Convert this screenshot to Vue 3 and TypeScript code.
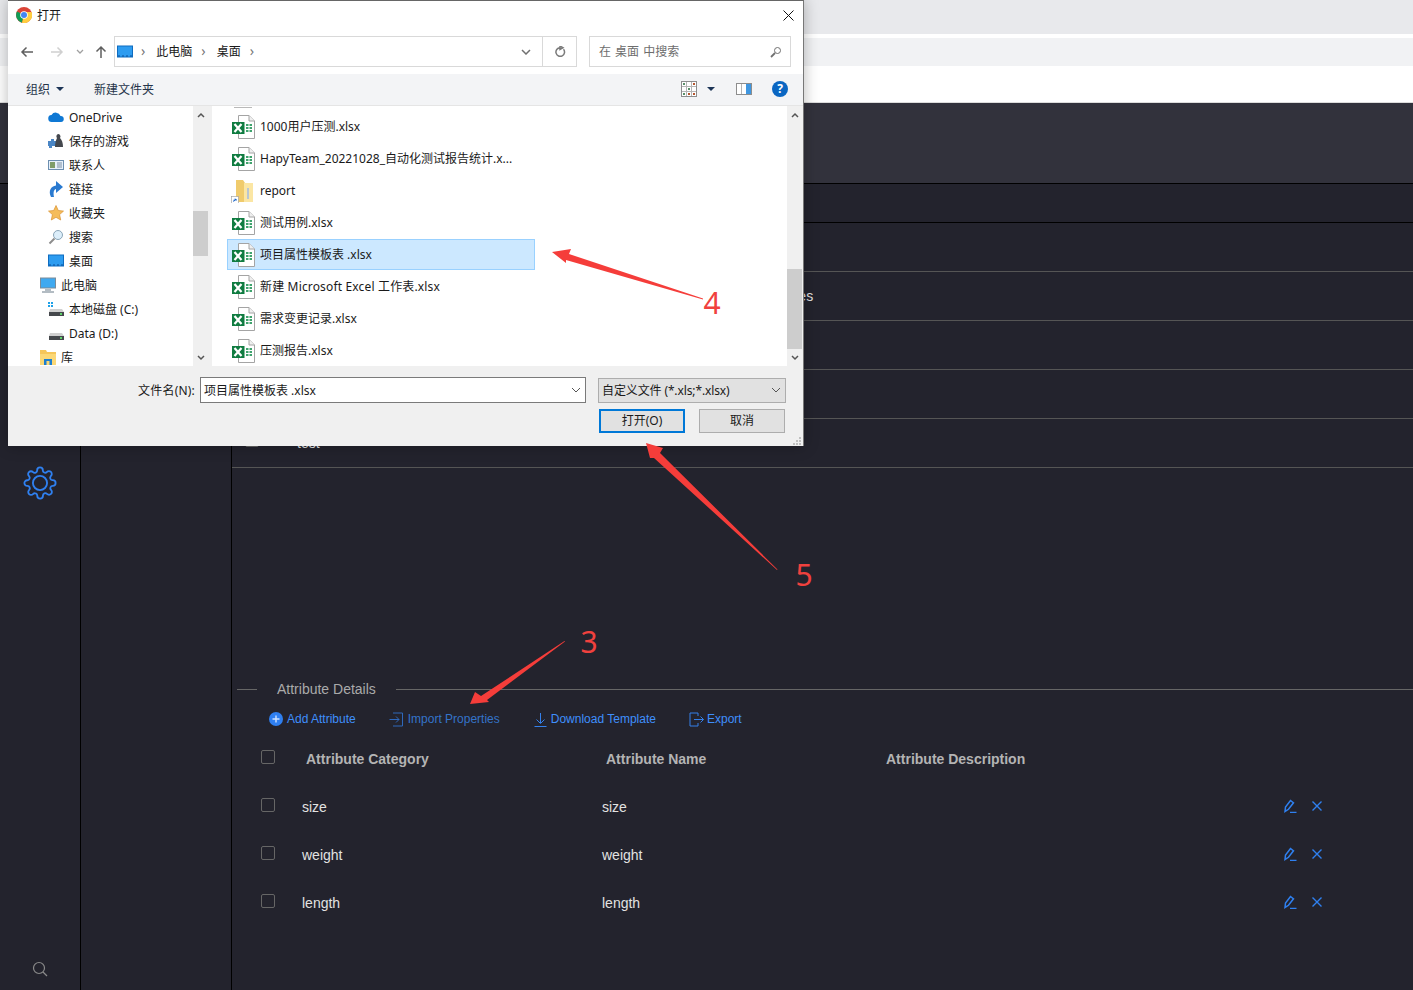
<template>
  <div class="page">
    <!-- browser chrome behind the dialog -->
    <div class="tabstrip"></div>
    <div class="urlbar"></div>
    <div class="bookmarks"></div>

    <header class="app-header"></header>

    <div class="app-body">
      <aside class="rail">
        <svg class="gear" viewBox="0 0 24 24">
          <circle cx="12" cy="12" r="5" />
          <path
            d="M19.4 15a1.65 1.65 0 0 0 .33 1.82l.06.06a2 2 0 0 1 0 2.83 2 2 0 0 1-2.83 0l-.06-.06a1.65 1.65 0 0 0-1.82-.33 1.65 1.65 0 0 0-1 1.51V21a2 2 0 0 1-2 2 2 2 0 0 1-2-2v-.09A1.65 1.65 0 0 0 9 19.4a1.65 1.65 0 0 0-1.82.33l-.06.06a2 2 0 0 1-2.83 0 2 2 0 0 1 0-2.83l.06-.06a1.65 1.65 0 0 0 .33-1.82 1.65 1.65 0 0 0-1.51-1H3a2 2 0 0 1-2-2 2 2 0 0 1 2-2h.09A1.65 1.65 0 0 0 4.6 9a1.65 1.65 0 0 0-.33-1.82l-.06-.06a2 2 0 0 1 0-2.83 2 2 0 0 1 2.83 0l.06.06a1.65 1.65 0 0 0 1.82.33H9a1.65 1.65 0 0 0 1-1.51V3a2 2 0 0 1 2-2 2 2 0 0 1 2 2v.09a1.65 1.65 0 0 0 1 1.51 1.65 1.65 0 0 0 1.82-.33l.06-.06a2 2 0 0 1 2.83 0 2 2 0 0 1 0 2.83l-.06.06a1.65 1.65 0 0 0-.33 1.82V9a1.65 1.65 0 0 0 1.51 1H21a2 2 0 0 1 2 2 2 2 0 0 1-2 2h-.09a1.65 1.65 0 0 0-1.51 1z"
          />
        </svg>
        <svg class="rail-search" viewBox="0 0 16 16">
          <circle cx="7" cy="7" r="5.5" />
          <path d="M11 11l4 4" />
        </svg>
      </aside>
      <nav class="subnav"></nav>

      <main class="content">
        <div class="tabbar"></div>
        <div v-for="(row, i) in topRows" :key="i" class="top-row">
          <span v-if="row.check" class="check check-top"></span>
          <span class="top-name">{{ row.name }}</span>
          <span class="top-desc">{{ row.desc }}</span>
        </div>

        <div class="divider">
          <span class="divider-text">Attribute Details</span>
        </div>

        <div class="actions">
          <a class="action add">
            <svg class="action-icon" viewBox="0 0 14 14">
              <circle cx="7" cy="7" r="7" fill="#2f7ff0" />
              <path d="M7 3.5v7M3.5 7h7" stroke="#cfe2ff" stroke-width="1.4" />
            </svg>
            Add Attribute
          </a>
          <a class="action import">
            <svg class="action-icon wide" viewBox="0 0 15 15">
              <path d="M4 1h9.500v13H4M0.500 7.500H10M7 4.500l3 3-3 3" />
            </svg>
            Import Properties
          </a>
          <a class="action download">
            <svg class="action-icon wide" viewBox="0 0 13 15">
              <path d="M6.500 1v10M2.500 7.500l4 4 4-4M0.500 14.500h12" />
            </svg>
            Download Template
          </a>
          <a class="action export">
            <svg class="action-icon wide" viewBox="0 0 15 15">
              <path d="M9 4V1H1v13h8v-3M5 7.500h9.500M11.500 4.500l3 3-3 3" />
            </svg>
            Export
          </a>
        </div>

        <div class="grid-row grid-head">
          <span class="check"></span>
          <span>Attribute Category</span>
          <span>Attribute Name</span>
          <span>Attribute Description</span>
          <span></span>
        </div>
        <div v-for="attr in attributes" :key="attr" class="grid-row">
          <span class="check"></span>
          <span>{{ attr }}</span>
          <span>{{ attr }}</span>
          <span></span>
          <span class="row-tools">
            <svg class="tool pencil" viewBox="0 0 14 14">
              <path d="M2 12.500L2.500 8l5-6.500 3 2.300-5 6.500zM7 13.500h6.500" />
            </svg>
            <svg class="tool close" viewBox="0 0 12 12">
              <path d="M1.500 1.500l9 9M10.500 1.500l-9 9" />
            </svg>
          </span>
        </div>
      </main>
    </div>

    <!-- Windows open-file dialog -->
    <section class="dialog">
      <svg class="defs" width="0" height="0">
        <symbol id="xlsx" viewBox="0 0 24 24">
          <path d="M7.500.5h10.500l5.500 5.500v17.500h-16z" fill="#fff" stroke="#a4a4a4" />
          <path d="M18 .5v5.500h5.500" fill="#efefef" stroke="#a4a4a4" />
          <rect x="1" y="7" width="12.500" height="12" fill="#107c41" />
          <path d="M3.500 9l7 8M10.500 9l-7 8" stroke="#fff" stroke-width="2.200" />
          <path d="M15 9h2.500v2H15zM18.500 9H21v2h-2.500zM15 12h2.500v2H15zM18.500 12H21v2h-2.500zM15 15h2.500v2H15zM18.500 15H21v2h-2.500z" fill="#3fa36d" />
        </symbol>
        <symbol id="folder" viewBox="0 0 24 24">
          <path d="M5 1h7l2 3h8v19H5z" fill="#f0cb6c" />
          <path d="M13 4h9v19h-9z" fill="#fbe6a4" />
          <path d="M16 9h2v11h-2z" fill="#b9c6d2" />
          <rect x=".5" y="17.500" width="7" height="7" fill="#fff" stroke="#9a9a9a" stroke-width=".6" />
          <path d="M2 23l.8-2.500h1.400l-.8-1 2.200.5v2l-.8-.8z" fill="#1e66c8" />
        </symbol>
        <symbol id="onedrive" viewBox="0 0 16 16">
          <path d="M4 13a3.500 3.500 0 0 1-.5-7A5 5 0 0 1 12.500 7 3 3 0 0 1 13 13z" fill="#0f78d4" />
        </symbol>
        <symbol id="games" viewBox="0 0 16 16">
          <path d="M0 8h3V6h3v2h2v5H4v2H1v-2H0z" fill="#4a86c5" />
          <path d="M10 1a2.500 2.500 0 0 1 2 4c2 2 3 5 3 9H7c0-4 1-7 2-9a2.500 2.500 0 0 1 1-4z" fill="#44484e" />
        </symbol>
        <symbol id="contact" viewBox="0 0 16 16">
          <rect x=".5" y="3.500" width="15" height="9" fill="#e6f0fa" stroke="#6d8fb0" />
          <rect x="2" y="5" width="5" height="6" fill="#7f9d6a" />
          <path d="M9 6h5M9 8h5M9 10h5" stroke="#7d8fa3" />
        </symbol>
        <symbol id="link" viewBox="0 0 16 16">
          <path d="M3 16C0 10 3 5 8 4.500V0l7 6-7 6V8C6 8.500 5 11 6 16z" fill="#2a7ad0" />
        </symbol>
        <symbol id="star" viewBox="0 0 16 16">
          <path d="M8 .5l2.300 5 5.200.6-3.900 3.500 1.100 5.400L8 12.300 3.300 15l1.100-5.400L.5 6.100l5.200-.6z" fill="#f5bc5a" stroke="#d9902f" stroke-width=".7" />
        </symbol>
        <symbol id="search" viewBox="0 0 16 16">
          <circle cx="10" cy="6" r="4.500" fill="#dceefa" stroke="#8aa5b8" />
          <path d="M6.500 9.500L1.500 14.500" stroke="#8d8d8d" stroke-width="2" />
        </symbol>
        <symbol id="desktop" viewBox="0 0 16 16">
          <rect x=".5" y="2" width="15" height="11" fill="#2d9cf0" stroke="#0f6cc0" />
          <path d="M1 12h14" stroke="#0a4f9a" stroke-dasharray="2 2" />
        </symbol>
        <symbol id="pc" viewBox="0 0 16 16">
          <rect x=".5" y="1" width="15" height="10" fill="#3fa9f0" stroke="#7a8b99" />
          <path d="M5 13h6M2 15h12" stroke="#9aa6b0" stroke-width="1.400" />
        </symbol>
        <symbol id="diskc" viewBox="0 0 16 16">
          <path d="M0 1h2v2H0zM3 1h2v2H3zM0 4h2v2H0zM3 4h2v2H3z" fill="#1ea1e8" />
          <path d="M2 8h12l2 3v4H1v-4z" fill="#d0d0d0" />
          <rect x="1" y="11" width="15" height="4" fill="#45484c" />
          <rect x="12" y="12" width="2" height="2" fill="#5fd16a" />
        </symbol>
        <symbol id="diskd" viewBox="0 0 16 16">
          <path d="M2 8h12l2 3v4H1v-4z" fill="#d0d0d0" />
          <rect x="1" y="11" width="15" height="4" fill="#45484c" />
          <rect x="12" y="12" width="2" height="2" fill="#5fd16a" />
        </symbol>
        <symbol id="library" viewBox="0 0 16 16">
          <path d="M0 1h6l1 2h9v13H0z" fill="#f5c65a" />
          <path d="M0 5h16v11H0z" fill="#fbd877" />
          <path d="M4 10h8v6H4z" fill="#1d7fd0" />
          <path d="M6.500 12h3v4h-3z" fill="#fbd877" />
        </symbol>
      </svg>

      <div class="title-bar">
        <svg class="chrome" viewBox="0 0 16 16">
          <circle cx="8" cy="8" r="8" fill="#db4437" />
          <path d="M8 8L1 4.500A8 8 0 0 0 6 15.800z" fill="#0f9d58" />
          <path d="M8 8l-2 7.800A8 8 0 0 0 15.500 5H8z" fill="#ffcd40" />
          <circle cx="8" cy="8" r="3.800" fill="#fff" />
          <circle cx="8" cy="8" r="3" fill="#4285f4" />
        </svg>
        <span class="title">打开</span>
        <svg class="title-close" viewBox="0 0 11 11">
          <path d="M.5.5l10 10M10.500.5l-10 10" />
        </svg>
      </div>

      <div class="nav-row">
        <svg class="nav-btn" viewBox="0 0 14 14">
          <path d="M13 7H2M6.500 2.500L2 7l4.500 4.500" />
        </svg>
        <svg class="nav-btn off" viewBox="0 0 14 14">
          <path d="M1 7h11M7.500 2.500L12 7l-4.500 4.500" />
        </svg>
        <svg class="nav-drop" viewBox="0 0 8 6">
          <path d="M1 1l3 3 3-3" />
        </svg>
        <svg class="nav-btn up" viewBox="0 0 14 14">
          <path d="M7 13V2M2.500 6.500L7 2l4.500 4.500" />
        </svg>
        <div class="address">
          <svg class="crumb-icon"><use href="#desktop" /></svg>
          <span class="crumb-sep">›</span>
          <span class="crumb">此电脑</span>
          <span class="crumb-sep">›</span>
          <span class="crumb">桌面</span>
          <span class="crumb-sep">›</span>
          <svg class="addr-chevron" viewBox="0 0 10 6">
            <path d="M1 1l4 4 4-4" />
          </svg>
          <span class="addr-refresh">
            <svg viewBox="0 0 12 12">
              <path d="M9.500 3.200A4.300 4.300 0 1 1 6 1.700M6 0v3.500L9 1.700z" />
            </svg>
          </span>
        </div>
        <div class="searchbox">
          <span>在 桌面 中搜索</span>
          <svg viewBox="0 0 12 12">
            <circle cx="7.500" cy="4.500" r="3" />
            <path d="M5 7l-4 4" stroke-width="1.800" />
          </svg>
        </div>
      </div>

      <div class="toolbar">
        <span class="tool-text">组织</span>
        <i class="caret"></i>
        <span class="tool-text new-folder">新建文件夹</span>
        <svg class="views" viewBox="0 0 16 16">
          <rect x=".5" y=".5" width="15" height="15" fill="#fff" stroke="#8d8d8d" />
          <path d="M5.500 1v14M10.500 1v14M1 5.500h14M1 10.500h14" stroke="#b5b5b5" />
          <path d="M2 2h2v2H2zM7 7h2v2H7zM2 12h2v2H2z" fill="#5a8f6a" />
          <path d="M12 2h2v2h-2zM12 12h2v2h-2zM7 12h2v2H7z" fill="#b5562f" />
        </svg>
        <i class="caret views-caret"></i>
        <svg class="pane" viewBox="0 0 16 12">
          <rect x=".5" y=".5" width="15" height="11" fill="#fff" stroke="#8d8d8d" />
          <rect x="10" y="1" width="5" height="10" fill="#3f96e0" />
          <path d="M5.500 1v10" stroke="#b5b5b5" />
        </svg>
        <span class="help">?</span>
      </div>

      <div class="browser">
        <div class="tree">
          <div
            v-for="item in treeItems"
            :key="item.label"
            class="tree-item"
            :class="{ root: item.root }"
          >
            <svg class="tree-icon"><use :href="'#' + item.icon" /></svg>
            <span>{{ item.label }}</span>
          </div>
        </div>
        <div class="scrollbar">
          <svg class="sb-arrow" viewBox="0 0 8 6"><path d="M1 5l3-3 3 3" /></svg>
          <div class="thumb tree-thumb"></div>
          <svg class="sb-arrow bottom" viewBox="0 0 8 6"><path d="M1 1l3 3 3-3" /></svg>
        </div>
        <div class="pane-gap"></div>
        <div class="files">
          <div class="cut-row"></div>
          <div
            v-for="file in files"
            :key="file.name"
            class="file"
            :class="{ selected: file.selected, spaced: file.spaced }"
          >
            <svg class="file-icon"><use :href="'#' + file.icon" /></svg>
            <span>{{ file.name }}</span>
          </div>
        </div>
        <div class="scrollbar">
          <svg class="sb-arrow" viewBox="0 0 8 6"><path d="M1 5l3-3 3 3" /></svg>
          <div class="thumb file-thumb"></div>
          <svg class="sb-arrow bottom" viewBox="0 0 8 6"><path d="M1 1l3 3 3-3" /></svg>
        </div>
      </div>

      <div class="footer">
        <div class="footer-row">
          <label class="file-label">文件名(N):</label>
          <div class="file-input">
            <span>项目属性模板表 .xlsx</span>
            <svg viewBox="0 0 10 6"><path d="M1 1l4 4 4-4" /></svg>
          </div>
          <div class="file-filter">
            <span>自定义文件 (*.xls;*.xlsx)</span>
            <svg viewBox="0 0 10 6"><path d="M1 1l4 4 4-4" /></svg>
          </div>
        </div>
        <div class="footer-buttons">
          <button class="win-btn primary">打开(O)</button>
          <button class="win-btn">取消</button>
        </div>
        <svg class="grip" viewBox="0 0 10 10">
          <path d="M7 1h2v2H7zM4 4h2v2H4zM7 4h2v2H7zM1 7h2v2H1zM4 7h2v2H4zM7 7h2v2H7z" />
        </svg>
      </div>
    </section>

    <!-- red annotations drawn over the screenshot -->
    <svg class="marks" viewBox="0 0 1413 990">
      <polygon points="552,252 571,249 569,254 703,298.600 703,299.400 566,260 566,263" />
      <polygon points="646,443 663,448 660,453 777.500,569.500 777,570 654,458 650,458" />
      <polygon points="470,704 475,692 481,696 564.500,641 565,641.500 487,700 489,702" />
      <text x="712" y="314">4</text>
      <text x="804" y="586">5</text>
      <text x="589" y="653">3</text>
    </svg>
  </div>
</template>

<script setup lang="ts">
interface TreeItem {
  label: string
  icon: string
  root?: boolean
}

interface FileItem {
  name: string
  icon: string
  selected?: boolean
  spaced?: boolean
}

const treeItems: TreeItem[] = [
  { label: 'OneDrive', icon: 'onedrive' },
  { label: '保存的游戏', icon: 'games' },
  { label: '联系人', icon: 'contact' },
  { label: '链接', icon: 'link' },
  { label: '收藏夹', icon: 'star' },
  { label: '搜索', icon: 'search' },
  { label: '桌面', icon: 'desktop' },
  { label: '此电脑', icon: 'pc', root: true },
  { label: '本地磁盘 (C:)', icon: 'diskc' },
  { label: 'Data (D:)', icon: 'diskd' },
  { label: '库', icon: 'library', root: true },
]

const files: FileItem[] = [
  { name: '1000用户压测.xlsx', icon: 'xlsx' },
  { name: 'HapyTeam_20221028_自动化测试报告统计.x...', icon: 'xlsx' },
  { name: 'report', icon: 'folder' },
  { name: '测试用例.xlsx', icon: 'xlsx' },
  { name: '项目属性模板表 .xlsx', icon: 'xlsx', selected: true },
  { name: '新建 Microsoft Excel 工作表.xlsx', icon: 'xlsx', spaced: true },
  { name: '需求变更记录.xlsx', icon: 'xlsx' },
  { name: '压测报告.xlsx', icon: 'xlsx' },
]

// rows mostly hidden by the dialog, only the tail of "Attributes" and the foot of "test" show
const topRows = [
  { name: '', desc: '', check: false },
  { name: '', desc: 'Attributes', check: false },
  { name: '', desc: '', check: false },
  { name: '', desc: '', check: false },
  { name: 'test', desc: '', check: true },
]

const attributes = ['size', 'weight', 'length']
</script>

<style>
html,
body {
  margin: 0;
  background: #23232d;
}
</style>

<style scoped>
.page {
  position: relative;
  width: 1413px;
  height: 990px;
  overflow: hidden;
  background: #23232d;
  font-family: 'Liberation Sans', 'Noto Sans CJK SC', sans-serif;
}
.tabstrip {
  height: 34px;
  background: #e8e9ec;
}
.urlbar {
  height: 28px;
  border-top: 4px solid #fff;
  background: #f1f2f4;
}
.bookmarks {
  height: 36px;
  background: #fff;
  border-bottom: 1px solid #dcdcdc;
}
.app-header {
  height: 80px;
  background: #32323c;
  border-bottom: 1px solid #000;
}
.app-body {
  display: flex;
  height: 806px;
}
.rail {
  width: 80px;
  flex: none;
  border-right: 1px solid #000;
  display: flex;
  flex-direction: column;
  align-items: center;
  padding-top: 282px;
  padding-bottom: 13px;
  height: 511px;
}
.gear {
  width: 34px;
  height: 34px;
  fill: none;
  stroke: #2f80f0;
  stroke-width: 1.3;
}
.rail-search {
  width: 16px;
  height: 16px;
  margin-top: auto;
  fill: none;
  stroke: #8a8a8a;
  stroke-width: 1.2;
}
.subnav {
  width: 150px;
  flex: none;
  border-right: 1px solid #000;
}
.content {
  flex: 1;
  min-width: 0;
  color: #e2e2e2;
  font-size: 14px;
}
.tabbar {
  height: 38px;
  border-bottom: 1px solid #000;
}
.top-row {
  position: relative;
  display: flex;
  align-items: center;
  height: 48px;
  border-bottom: 1px solid #555;
}
.top-name {
  width: 457px;
  margin-left: 65px;
}
.top-row:last-of-type .top-name {
  padding-top: 4px;
}
.top-row .check-top {
  position: absolute;
  left: 13px;
  top: 14px;
}
.divider {
  display: flex;
  align-items: center;
  margin: 213px 0 0 5px;
  height: 16px;
  color: #aaa;
}
.divider::before {
  content: '';
  width: 20px;
  height: 1px;
  background: #666;
}
.divider::after {
  content: '';
  flex: 1;
  height: 1px;
  background: #666;
}
.divider-text {
  padding: 0 20px;
}
.actions {
  display: flex;
  align-items: center;
  gap: 33px;
  margin-top: 13px;
  padding-left: 37px;
  height: 18px;
  font-size: 12px;
}
.action {
  display: flex;
  align-items: center;
  gap: 4px;
  color: #3f8ffc;
}
.action.import {
  color: #3473c9;
}
.action.download {
  gap: 3px;
}
.action.export {
  gap: 3px;
}
.action-icon {
  width: 14px;
  height: 14px;
}
.action-icon.wide {
  width: 15px;
  height: 15px;
  fill: none;
  stroke: #3480ea;
  stroke-width: 1;
}
.import .action-icon.wide {
  stroke: #2f68bb;
}
.grid-row {
  display: grid;
  grid-template-columns: 41px 300px 280px 1fr 40px;
  align-items: center;
  height: 48px;
  padding: 0 90px 0 29px;
}
.grid-head {
  height: 49px;
  margin-top: 6px;
  font-weight: 700;
  color: #b4b4b4;
}
.grid-head span:not(.check) {
  padding-left: 4px;
}
.check {
  display: block;
  width: 12px;
  height: 12px;
  border: 1px solid #666;
  border-radius: 2px;
  position: relative;
  top: -2px;
}
.row-tools {
  display: flex;
  justify-content: flex-end;
  align-items: center;
  gap: 14px;
  position: relative;
  top: -1px;
}
.tool {
  width: 14px;
  height: 14px;
  flex: none;
  fill: none;
  stroke: #2f80f0;
  stroke-width: 1.2;
}
.tool.pencil {
  stroke-width: 1.5;
}
.tool.close {
  width: 12px;
  height: 12px;
  stroke-width: 1.4;
}

.dialog {
  position: absolute;
  left: 8px;
  top: 0;
  width: 796px;
  height: 446px;
  background: #fff;
  border-top: 1px solid #666;
  border-right: 1px solid #777;
  box-shadow: 0 0 14px rgba(0, 0, 0, 0.28);
  box-sizing: border-box;
  display: flex;
  flex-direction: column;
  font-family: 'Noto Sans', 'Noto Sans CJK SC', sans-serif;
  font-size: 12px;
  color: #1a1a1a;
}
.defs {
  position: absolute;
}
.title-bar {
  display: flex;
  align-items: center;
  height: 28px;
  flex: none;
  padding: 0 9px 0 8px;
}
.chrome {
  width: 16px;
  height: 16px;
  margin-right: 5px;
}
.title {
  font-size: 12px;
}
.title-close {
  width: 11px;
  height: 11px;
  margin-left: auto;
  fill: none;
  stroke: #111;
}
.nav-row {
  display: flex;
  align-items: center;
  height: 45px;
  flex: none;
  padding-left: 12px;
}
.nav-btn {
  width: 14px;
  height: 14px;
  flex: none;
  fill: none;
  stroke: #5f5f5f;
  stroke-width: 1.5;
}
.nav-btn.off {
  margin-left: 16px;
  stroke: #d0d0d0;
}
.nav-drop {
  width: 8px;
  height: 6px;
  margin-left: 12px;
  fill: none;
  stroke: #a0a0a0;
  stroke-width: 1.3;
}
.nav-btn.up {
  margin-left: 10px;
}
.address {
  display: flex;
  align-items: center;
  width: 463px;
  height: 31px;
  margin-left: 6px;
  border: 1px solid #d9d9d9;
  box-sizing: border-box;
}
.crumb-icon {
  width: 16px;
  height: 16px;
  margin-left: 2px;
}
.crumb-sep {
  color: #777;
  font-size: 14px;
  margin: 0 9px 2px 8px;
}
.crumb {
  margin: 0 1px 2px 2px;
}
.addr-chevron {
  width: 10px;
  height: 6px;
  margin-left: auto;
  margin-right: 11px;
  fill: none;
  stroke: #707070;
  stroke-width: 1.5;
}
.addr-refresh {
  display: flex;
  align-items: center;
  justify-content: center;
  width: 33px;
  height: 100%;
  border-left: 1px solid #d9d9d9;
}
.addr-refresh svg {
  width: 12px;
  height: 12px;
  fill: none;
  stroke: #7a7a7a;
  stroke-width: 1.5;
}
.searchbox {
  display: flex;
  align-items: center;
  justify-content: space-between;
  width: 202px;
  height: 31px;
  margin-left: 12px;
  padding: 0 8px 0 9px;
  border: 1px solid #d9d9d9;
  box-sizing: border-box;
  color: #6d6d6d;
  word-spacing: 1px;
}
.searchbox span {
  margin-bottom: 2px;
}
.searchbox svg {
  width: 12px;
  height: 12px;
  fill: none;
  stroke: #707070;
}
.toolbar {
  display: flex;
  align-items: center;
  height: 32px;
  flex: none;
  padding-left: 18px;
  padding-bottom: 2px;
  background: #f3f4f6;
  border-bottom: 1px solid #e5e5e5;
  box-sizing: border-box;
  color: #26344a;
}
.caret {
  width: 0;
  height: 0;
  margin: 1px 0 0 6px;
  border: 4px solid transparent;
  border-top: 4px solid #1d3557;
  border-bottom: 0;
}
.new-folder {
  margin-left: 30px;
}
.views {
  width: 16px;
  height: 16px;
  margin-left: 527px;
}
.views-caret {
  margin-left: 10px;
}
.pane {
  width: 16px;
  height: 12px;
  margin-left: 21px;
}
.help {
  display: flex;
  align-items: center;
  justify-content: center;
  width: 16px;
  height: 16px;
  margin-left: 20px;
  border-radius: 50%;
  background: #0a66c2;
  color: #fff;
  font-size: 12px;
  font-weight: 700;
}
.browser {
  display: flex;
  height: 260px;
  flex: none;
  overflow: hidden;
  padding-right: 1px;
  background: #f0f0f0;
}
.tree {
  width: 185px;
  flex: none;
  overflow: hidden;
  background: #fff;
}
.tree-item {
  display: flex;
  align-items: center;
  height: 24px;
  padding-left: 40px;
  gap: 5px;
  white-space: nowrap;
}
.tree-item:first-child {
  margin-top: -1px;
}
.tree-item.root {
  padding-left: 32px;
}
.tree-icon {
  width: 16px;
  height: 16px;
  flex: none;
}
.scrollbar {
  position: relative;
  width: 15px;
  flex: none;
  background: #f0f0f0;
}
.sb-arrow {
  position: absolute;
  left: 4px;
  top: 6px;
  width: 8px;
  height: 6px;
  fill: none;
  stroke: #555;
  stroke-width: 1.5;
}
.sb-arrow.bottom {
  top: auto;
  bottom: 5px;
}
.thumb {
  position: absolute;
  left: 0;
  right: 0;
  background: #cdcdcd;
}
.tree-thumb {
  top: 105px;
  height: 45px;
}
.file-thumb {
  top: 163px;
  height: 80px;
}
.pane-gap {
  width: 3px;
  flex: none;
  margin-left: 1px;
  background: #f0f0f0;
}
.files {
  flex: 1;
  padding-left: 15px;
  overflow: hidden;
  background: #fff;
}
.cut-row {
  width: 18px;
  height: 1px;
  margin: 0 0 3px 7px;
  border-bottom: 1px solid #b9b9b9;
}
.file {
  display: flex;
  align-items: center;
  gap: 5px;
  width: 308px;
  height: 32px;
  padding-left: 4px;
  box-sizing: border-box;
  white-space: nowrap;
}
.file span {
  margin-top: -2px;
}
.file.spaced span {
  letter-spacing: 0.16px;
}
.file.selected {
  height: 31px;
  margin-bottom: 1px;
  background: #cce8ff;
  border: 1px solid #99d1ff;
  padding-left: 3px;
}
.file-icon {
  width: 24px;
  height: 24px;
  flex: none;
}
.footer {
  position: relative;
  flex: 1;
  background: #f0f0f0;
  padding-top: 11px;
}
.footer-row {
  display: flex;
  align-items: center;
}
.file-label {
  width: 187px;
  text-align: right;
  margin-right: 5px;
  letter-spacing: 0.2px;
}
.file-input,
.file-filter {
  display: flex;
  align-items: center;
  justify-content: space-between;
  height: 26px;
  padding: 0 4px 0 3px;
  box-sizing: border-box;
  border: 1px solid #7a7a7a;
  background: #fff;
}
.file-input {
  width: 386px;
}
.file-filter {
  width: 188px;
  height: 25px;
  margin-left: 12px;
  background: #e1e1e1;
  border-color: #adadad;
  letter-spacing: -0.12px;
}
.file-input svg,
.file-filter svg {
  width: 10px;
  height: 6px;
  fill: none;
  stroke: #555;
}
.footer-buttons {
  display: flex;
  justify-content: flex-end;
  gap: 14px;
  margin-top: 6px;
  padding-right: 18px;
}
.win-btn {
  width: 86px;
  height: 24px;
  padding: 0 0 2px;
  background: #e1e1e1;
  border: 1px solid #adadad;
  font: inherit;
  color: #1a1a1a;
}
.win-btn.primary {
  border: 2px solid #0078d7;
}
.grip {
  position: absolute;
  right: 1px;
  bottom: 0;
  width: 10px;
  height: 10px;
  fill: #c0c0c0;
}

.marks {
  position: absolute;
  inset: 0;
  width: 1413px;
  height: 990px;
  pointer-events: none;
}
.marks polygon {
  fill: #f53d3a;
}
.marks text {
  fill: #f0413e;
  font-family: 'Noto Sans', sans-serif;
  font-size: 30px;
  font-weight: 400;
  text-anchor: middle;
}
</style>
